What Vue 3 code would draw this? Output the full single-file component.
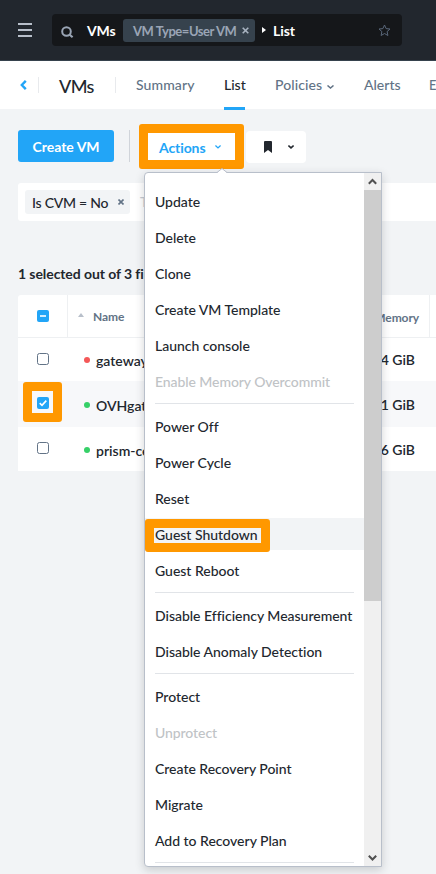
<script setup>
const tabs = [
  { label: 'Summary', cls: 't-summary' },
  { label: 'List', cls: 't-list', active: true },
  { label: 'Policies', cls: 't-policies', caret: true },
  { label: 'Alerts', cls: 't-alerts' },
  { label: 'E', cls: 't-events' }
]

const rows = [
  { name: 'gateway', memory: '4 GiB', status: 'off', height: 43 },
  { name: 'OVHgatew', memory: '1 GiB', status: 'on', selected: true, height: 46 },
  { name: 'prism-cent', memory: '16 GiB', status: 'on', height: 44 }
]

const groups = [
  [
    { label: 'Update' },
    { label: 'Delete' },
    { label: 'Clone' },
    { label: 'Create VM Template' },
    { label: 'Launch console' },
    { label: 'Enable Memory Overcommit', disabled: true }
  ],
  [
    { label: 'Power Off' },
    { label: 'Power Cycle' },
    { label: 'Reset' },
    { label: 'Guest Shutdown', marked: true },
    { label: 'Guest Reboot' }
  ],
  [{ label: 'Disable Efficiency Measurement' }, { label: 'Disable Anomaly Detection' }],
  [
    { label: 'Protect' },
    { label: 'Unprotect', disabled: true },
    { label: 'Create Recovery Point' },
    { label: 'Migrate' },
    { label: 'Add to Recovery Plan' }
  ]
]
</script>

<template>
  <div class="page">
    <header class="topbar">
      <svg class="burger" width="14" height="14" viewBox="0 0 14 14"><path d="M0 1h14M0 7h14M0 13h14" stroke="#b8bfca" stroke-width="2" /></svg>
      <div class="search">
        <svg class="glass" width="13" height="13" viewBox="0 0 13 13"><circle cx="5.5" cy="5.5" r="4.3" fill="none" stroke="#9aa5b5" stroke-width="2" /><path d="M8.7 8.7L11.6 11.3" stroke="#9aa5b5" stroke-width="2.2" /></svg>
        <b class="crumb first">VMs</b>
        <span class="tag">
          <span class="tag-text">VM Type=User VM</span>
          <svg width="7" height="7" viewBox="0 0 7 7"><path d="M.7.7l5.6 5.6M6.3.7L.7 6.3" stroke="#a9b4c2" stroke-width="1.6" /></svg>
        </span>
        <svg class="arrow" width="4" height="6" viewBox="0 0 4 6"><path d="M0 0l4 3-4 3z" fill="#fff" /></svg>
        <b class="crumb">List</b>
        <svg class="star" width="13" height="13" viewBox="0 0 13 13"><path d="M6.5 1l1.6 3.6 3.9.4-2.9 2.6.8 3.9-3.4-2-3.4 2 .8-3.9L1 5l3.9-.4z" fill="none" stroke="#59677a" stroke-width="1" /></svg>
      </div>
    </header>

    <nav class="nav">
      <svg class="back" width="7" height="10" viewBox="0 0 7 10"><path d="M5.8 .8L1.8 5l4 4.2" fill="none" stroke="#22a5f7" stroke-width="2.4" /></svg>
      <i class="sep s1"></i>
      <span class="title">VMs</span>
      <i class="sep s2"></i>
      <span v-for="t in tabs" :key="t.label" class="tab" :class="[t.cls, { active: t.active }]">
        {{ t.label }}
        <svg v-if="t.caret" class="caret" width="7" height="4" viewBox="0 0 7 4"><path d="M.5 .5L3.5 3 6.5 .5" fill="none" stroke="#627386" stroke-width="1.5" /></svg>
      </span>
    </nav>

    <main class="content">
      <div class="toolbar">
        <button class="create">Create VM</button>
        <i class="tool-sep"></i>
        <button class="actions">
          <span>Actions</span>
          <svg width="6" height="4" viewBox="0 0 6 4"><path d="M.4 .5L3 2.9 5.6 .5" fill="none" stroke="#22a5f7" stroke-width="1.4" /></svg>
        </button>
        <button class="bookmark">
          <svg width="8" height="12" viewBox="0 0 8 12"><path d="M0 1Q0 0 1 0h6q1 0 1 1v11L4 9 0 12z" fill="#22272e" /></svg>
          <svg width="6" height="4" viewBox="0 0 6 4"><path d="M.4 .5L3 2.9 5.6 .5" fill="none" stroke="#22272e" stroke-width="1.5" /></svg>
        </button>
      </div>

      <div class="filter">
        <span class="chip">
          <span class="chip-text">Is CVM = No</span>
          <svg width="6" height="6" viewBox="0 0 6 6"><path d="M.5.5l5 5M5.5.5l-5 5" stroke="#627386" stroke-width="1.6" /></svg>
        </span>
        <span class="hint">T</span>
      </div>

      <h2 class="count">1 selected out of 3 fi</h2>

      <div class="table">
        <div class="thead">
          <div class="check-cell">
            <svg width="12" height="12" viewBox="0 0 12 12"><rect width="12" height="12" rx="2" fill="#22a5f7" /><path d="M3 6h6" stroke="#fff" stroke-width="1.6" /></svg>
          </div>
          <div class="name-head">
            <svg width="6" height="4" viewBox="0 0 6 4"><path d="M0 4l3-4 3 4z" fill="#b8bfca" /></svg>
            <span>Name</span>
          </div>
          <div class="mem-head">Memory</div>
        </div>
        <div v-for="r in rows" :key="r.name" class="row" :class="{ selected: r.selected }" :style="{ height: r.height + 'px' }">
          <div class="check-cell">
            <svg v-if="r.selected" width="12" height="12" viewBox="0 0 12 12"><rect width="12" height="12" rx="2" fill="#22a5f7" /><path d="M2.7 6.2l2.3 2.2 4.3-4.8" fill="none" stroke="#fff" stroke-width="1.6" /></svg>
            <svg v-else width="12" height="12" viewBox="0 0 12 12"><rect x=".5" y=".5" width="11" height="11" rx="2" fill="#fff" stroke="#627386" /></svg>
            <i v-if="r.selected" class="mark check-mark"></i>
          </div>
          <div class="name"><i class="dot" :class="r.status"></i><span>{{ r.name }}</span></div>
          <div class="mem">{{ r.memory }}</div>
        </div>
      </div>
    </main>

    <div class="menu">
      <svg class="notch" width="10" height="5" viewBox="0 0 10 5"><path d="M0 5L5 .7 10 5z" fill="#fff" /><path d="M0 4.5L5 .5l5 4" fill="none" stroke="#b8bfca" /></svg>
      <div class="items">
        <div v-for="(g, i) in groups" :key="i" class="group">
          <div v-for="it in g" :key="it.label" class="item" :class="{ disabled: it.disabled, hover: it.marked }">
            <span>{{ it.label }}</span>
            <i v-if="it.marked" class="mark item-mark"></i>
          </div>
        </div>
      </div>
      <div class="scroll">
        <svg class="sbtn" width="17" height="17" viewBox="0 0 17 17"><path d="M4.8 10.8L8.5 7l3.7 3.8" fill="none" stroke="#505050" stroke-width="2" /></svg>
        <div class="thumb"></div>
        <svg class="sbtn" width="17" height="17" viewBox="0 0 17 17"><path d="M4.8 6.7l3.7 3.8 3.7-3.8" fill="none" stroke="#505050" stroke-width="2" /></svg>
      </div>
    </div>
  </div>
</template>

<style>
body { margin: 0; }
</style>

<style scoped>
.page { position: relative; width: 436px; height: 874px; overflow: hidden; background: #f2f4f6; color: #22272e; font: 500 14px/20px Lato, "Open Sans", sans-serif; white-space: nowrap; }
.page * { box-sizing: border-box; }
svg { display: block; flex: none; }
button { font: inherit; border: 0; padding: 0; flex: none; }

.topbar { display: flex; height: 61px; padding: 14px 0 0 18px; background: #22272e; border-bottom: 1px solid #36424d; }
.burger { margin-top: 9px; }
.search { display: flex; align-items: center; width: 350px; height: 32px; margin-left: 20px; padding-left: 9px; background: #15171a; border-radius: 4px; }
.glass { margin-top: 4px; }
.crumb { color: #fff; font-weight: 700; letter-spacing: -.1px; margin-top: 2px; }
.crumb.first { width: 28px; margin-left: 13px; margin-right: 8px; }
.tag { display: flex; align-items: center; justify-content: space-between; width: 132px; height: 23px; padding: 0 6px 0 10px; margin-top: 1px; border-radius: 3px; background: #36424d; color: #9aa5b5; font-size: 13px; font-weight: 700; letter-spacing: -.45px; }
.tag-text { margin-top: 1px; }
.arrow { margin: 0 7px 0 7px; }
.star { margin-left: auto; margin-right: 11px; }

.nav { display: flex; height: 48px; background: #fff; }
.back { margin: 19px 0 0 20px; }
.sep { width: 1px; height: 16px; background: #e8eaed; flex: none; }
.s1 { margin: 16px 0 0 11px; }
.s2 { margin: 16px 0 0 20px; }
.title { flex: none; width: 36px; margin: 15px 0 0 20px; font-size: 18px; letter-spacing: -.6px; }
.tab { display: flex; flex: none; height: 49px; padding-top: 14px; color: #627386; }
.tab.active { color: #22272e; border-bottom: 3px solid #22a5f7; }
.t-summary { width: 59px; margin-left: 20px; letter-spacing: .1px; }
.t-list { width: 21px; margin-left: 29px; }
.t-policies { width: 60px; margin-left: 30px; letter-spacing: .1px; }
.t-alerts { width: 37px; margin-left: 29px; }
.t-events { margin-left: 28px; width: 8px; font-size: 13px; }
.caret { margin: 10px 0 0 5px; }

.content { padding: 21px 0 0 18px; }
.toolbar { display: flex; }
.create { width: 96px; height: 32px; border-radius: 3px; background: #22a5f7; color: #fff; font-weight: 700; padding-top: 2px; }
.tool-sep { width: 1px; height: 32px; margin-left: 15px; background: #d0d4da; }
.actions { display: flex; align-items: center; justify-content: space-between; width: 105px; height: 45px; margin: -6px 0 -7px 9px; padding: 2px 14px 0 11px; border: 9px solid #ff9800; border-radius: 3px; background: #fff; color: #22a5f7; font-weight: 700; letter-spacing: -.1px; }
.actions svg { margin-top: -2px; }
.bookmark { display: flex; align-items: center; gap: 16px; width: 60px; height: 32px; margin: 1px 0 0 2px; padding-left: 18px; background: #fff; border-radius: 4px; }
.filter { display: flex; align-items: center; height: 38px; margin-top: 20px; padding-left: 7px; background: #fff; border-radius: 3px 0 0 3px; }
.chip { display: flex; align-items: center; justify-content: space-between; width: 105px; height: 24px; padding: 0 6px 0 7px; border-radius: 3px; background: #f2f4f6; }
.chip-text { padding-top: 2px; letter-spacing: -.25px; }
.hint { margin-left: 10px; color: #c5cad2; }
.count { margin: 43px 0 11px; font-size: 14px; line-height: 20px; font-weight: 700; letter-spacing: -.08px; }

.table { background: #fff; border-radius: 3px 0 0 0; }
.thead, .row { display: flex; }
.thead { height: 43px; border-bottom: 1px solid #eef0f2; color: #627386; font-size: 12px; font-weight: 700; letter-spacing: -.1px; }
.check-cell { position: relative; display: flex; align-items: center; justify-content: center; flex: none; width: 50px; }
.row .check-cell { padding-bottom: 2px; }
.thead .check-cell { border-right: 1px solid #eef0f2; }
.name-head { display: flex; align-items: center; gap: 9px; width: 240px; padding-left: 10px; padding-top: 2px; }
.name-head svg { margin-top: -5px; }
.mem-head { width: 122px; padding: 13px 10px 0 0; text-align: right; border-right: 1px solid #eef0f2; }
.selected { background: #f7f8fa; }
.name { display: flex; align-items: center; width: 240px; padding-left: 16px; padding-top: 3px; font-weight: 600; }
.dot { width: 6px; height: 6px; margin: -2px 6px 0 0; border-radius: 50%; }
.off { background: #f45858; }
.on { background: #36d068; }
.mem { display: flex; align-items: center; justify-content: flex-end; width: 107px; padding-top: 1px; font-weight: 600; }

.mark { position: absolute; border: 9px solid #ff9800; border-radius: 3px; }
.check-mark { left: 5px; top: 1px; width: 39px; height: 40px; }
.item-mark { left: 0; top: 1px; width: 125px; height: 33px; }

.menu { position: absolute; left: 144px; top: 172px; display: flex; width: 238px; height: 695px; border: 1px solid #b8bfca; border-radius: 4px 0 0 4px; background: #fff; box-shadow: 0 3px 10px rgba(34, 39, 46, .2); }
.notch { position: absolute; left: 72px; top: -5px; }
.items { width: 219px; padding-top: 12px; }
.group { display: flex; flex-direction: column; gap: 4px; }
.group::after { content: ""; height: 1px; margin: 2px 10px 6px; background: #e1e4e8; }
.item { position: relative; height: 32px; padding: 7px 0 0 10px; letter-spacing: -.02px; }
.item.hover { background: #f2f4f6; }
.item.disabled { color: #c0c3c6; letter-spacing: -.08px; }
.scroll { display: flex; flex-direction: column; width: 17px; background: #f0f0f0; }
.thumb { height: 411px; background: #cdcdcd; }
.sbtn:last-child { margin-top: auto; }
</style>
